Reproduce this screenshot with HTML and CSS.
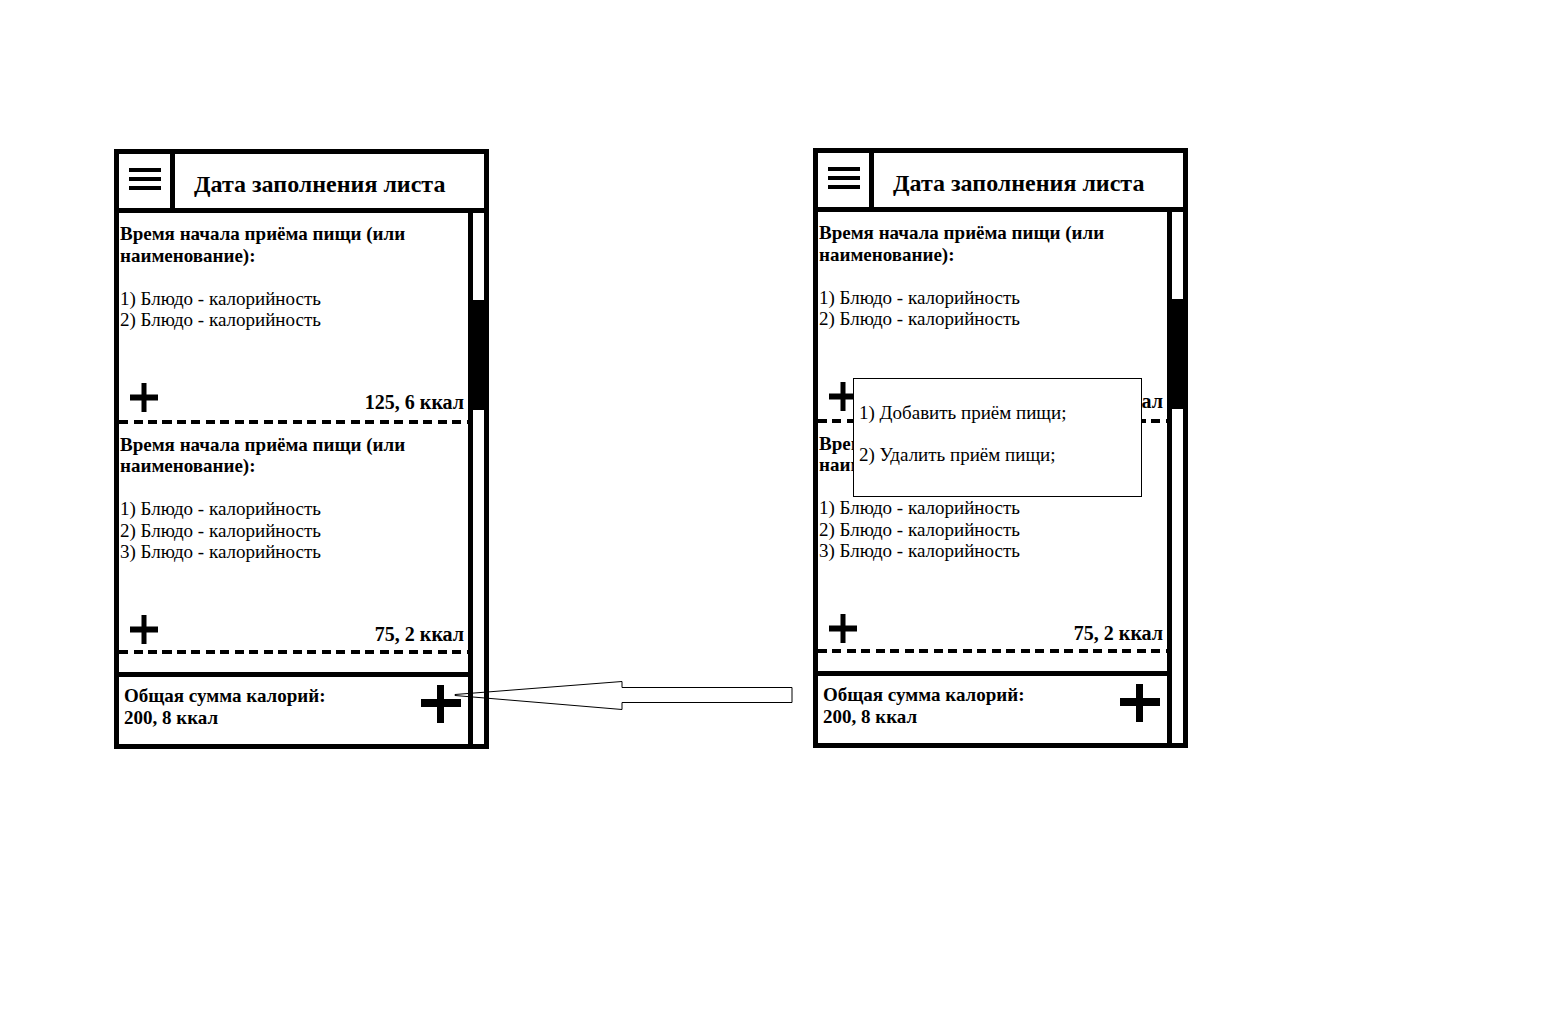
FILE: index.html
```html
<!DOCTYPE html>
<html lang="ru">
<head>
  <meta charset="UTF-8">
  <title>Лист питания</title>
  <link rel="stylesheet" href="styles.css">
</head>
<body>
  <div class="board">

    <!-- Экран 1: список приёмов пищи -->
    <div class="phone">
      <div class="phone-header">
        <div class="menu-btn"><span></span><span></span><span></span></div>
        <h1 class="phone-title">Дата заполнения листа</h1>
      </div>
      <div class="phone-body">
        <div class="feed">
          <div class="meal">
            <p class="meal-title">Время начала приёма пищи (или наименование):</p>
            <ul class="meal-list">
              <li>1) Блюдо - калорийность</li>
              <li>2) Блюдо - калорийность</li>
            </ul>
            <div class="meal-foot">
              <svg class="plus" width="28" height="29" viewBox="0 0 28 29"><rect x="11.5" y="0" width="5" height="29"/><rect x="0" y="11.5" width="28" height="6"/></svg>
              <span class="kcal">125, 6 ккал</span>
            </div>
          </div>
          <div class="dash"></div>
          <div class="meal">
            <p class="meal-title">Время начала приёма пищи (или наименование):</p>
            <ul class="meal-list">
              <li>1) Блюдо - калорийность</li>
              <li>2) Блюдо - калорийность</li>
              <li>3) Блюдо - калорийность</li>
            </ul>
            <div class="meal-foot">
              <svg class="plus" width="28" height="29" viewBox="0 0 28 29"><rect x="11.5" y="0" width="5" height="29"/><rect x="0" y="11.5" width="28" height="6"/></svg>
              <span class="kcal">75, 2 ккал</span>
            </div>
          </div>
          <div class="dash"></div>
          <div class="spacer"></div>
          <div class="total">
            <p>Общая сумма калорий:<br>200, 8 ккал</p>
            <svg class="plus-big" width="40" height="38" viewBox="0 0 40 38"><rect x="16" y="0" width="7" height="38"/><rect x="0" y="14" width="40" height="8"/></svg>
          </div>
        </div>
        <div class="scroll-track"><div class="scroll-thumb"></div></div>
      </div>
    </div>

    <!-- Экран 2: то же, с открытым меню -->
    <div class="phone phone-menu">
      <div class="phone-header">
        <div class="menu-btn"><span></span><span></span><span></span></div>
        <h1 class="phone-title">Дата заполнения листа</h1>
      </div>
      <div class="phone-body">
        <div class="feed">
          <div class="meal">
            <p class="meal-title">Время начала приёма пищи (или наименование):</p>
            <ul class="meal-list">
              <li>1) Блюдо - калорийность</li>
              <li>2) Блюдо - калорийность</li>
            </ul>
            <div class="meal-foot">
              <svg class="plus" width="28" height="29" viewBox="0 0 28 29"><rect x="11.5" y="0" width="5" height="29"/><rect x="0" y="11.5" width="28" height="6"/></svg>
              <span class="kcal">125, 6 ккал</span>
            </div>
          </div>
          <div class="dash"></div>
          <div class="meal">
            <p class="meal-title">Время начала приёма пищи (или наименование):</p>
            <ul class="meal-list">
              <li>1) Блюдо - калорийность</li>
              <li>2) Блюдо - калорийность</li>
              <li>3) Блюдо - калорийность</li>
            </ul>
            <div class="meal-foot">
              <svg class="plus" width="28" height="29" viewBox="0 0 28 29"><rect x="11.5" y="0" width="5" height="29"/><rect x="0" y="11.5" width="28" height="6"/></svg>
              <span class="kcal">75, 2 ккал</span>
            </div>
          </div>
          <div class="dash"></div>
          <div class="spacer"></div>
          <div class="total">
            <p>Общая сумма калорий:<br>200, 8 ккал</p>
            <svg class="plus-big" width="40" height="38" viewBox="0 0 40 38"><rect x="16" y="0" width="7" height="38"/><rect x="0" y="14" width="40" height="8"/></svg>
          </div>
        </div>
        <div class="scroll-track"><div class="scroll-thumb"></div></div>
      </div>

      <div class="menu-popup">
        <p>1) Добавить приём пищи;</p>
        <p>2) Удалить приём пищи;</p>
      </div>
    </div>

    <!-- стрелка: кнопка "+" открывает меню -->
    <svg class="arrow" width="340" height="31" viewBox="0 0 340 31">
      <polygon points="1,14.5 168,1.5 168,7.5 338,7.5 338,22.5 168,22.5 168,29.5 1,15.5" fill="none" stroke="#000" stroke-width="1"/>
    </svg>
  </div>
</body>
</html>
```

FILE: styles.css
```css
* {
  margin: 0;
  padding: 0;
  box-sizing: border-box;
}

body {
  font-family: "Liberation Serif", "Times New Roman", serif;
  font-size: 19px;
  line-height: 21.5px;
  color: #000;
  background: #fff;
}

.board {
  position: relative;
  display: flex;
  align-items: flex-start;
  gap: 324px;
  padding: 149px 0 0 114px;
  min-height: 100vh;
}

.phone {
  position: relative;
  width: 375px;
  height: 600px;
  border: 5px solid #000;
  display: flex;
  flex-direction: column;
}

.phone-menu {
  margin-top: -1px;
}

/* header */
.phone-header {
  display: flex;
  height: 59px;
  flex-shrink: 0;
  border-bottom: 5px solid #000;
}

.menu-btn {
  width: 56px;
  border-right: 5px solid #000;
  display: flex;
  flex-direction: column;
  gap: 5px;
  padding: 14px 0 0 10px;
}

.menu-btn span {
  display: block;
  width: 32px;
  height: 4px;
  background: #000;
}

.phone-title {
  display: flex;
  align-items: center;
  padding: 8px 0 0 19px;
  font-size: 24px;
  font-weight: bold;
}

/* body */
.phone-body {
  flex: 1;
  display: flex;
  min-height: 0;
}

.feed {
  flex: 1;
  display: flex;
  flex-direction: column;
  border-right: 5px solid #000;
}

.scroll-track {
  width: 11px;
}

.scroll-thumb {
  margin-top: 87px;
  height: 110px;
  background: #000;
}

.meal {
  padding: 10px 0 6px 1px;
}

.meal-title {
  font-weight: bold;
}

.meal-list {
  list-style: none;
  margin-top: 21.5px;
}

.meal-foot {
  display: flex;
  justify-content: space-between;
  align-items: flex-end;
  height: 31px;
  margin-top: 52px;
  padding: 0 4px 0 10px;
}

.meal-foot .plus {
  align-self: flex-start;
}

.kcal {
  font-size: 20px;
  font-weight: bold;
}

.dash {
  height: 4px;
  background: repeating-linear-gradient(90deg, #000 0 9px, transparent 9px 14.5px);
}

.meal + .dash + .meal + .dash {
  margin-top: -2px;
}

.spacer {
  flex: 1;
}

.total {
  display: flex;
  justify-content: space-between;
  align-items: flex-start;
  height: 72px;
  border-top: 5px solid #000;
  padding: 8px 7px 0 5px;
  font-weight: bold;
}

/* popup menu */
.menu-popup {
  position: absolute;
  left: 35px;
  top: 225px;
  width: 289px;
  height: 119px;
  border: 1px solid #000;
  background: #fff;
  padding: 23px 0 0 5px;
}

.menu-popup p + p {
  margin-top: 20.5px;
}

.arrow {
  position: absolute;
  left: 454px;
  top: 680px;
}
```
